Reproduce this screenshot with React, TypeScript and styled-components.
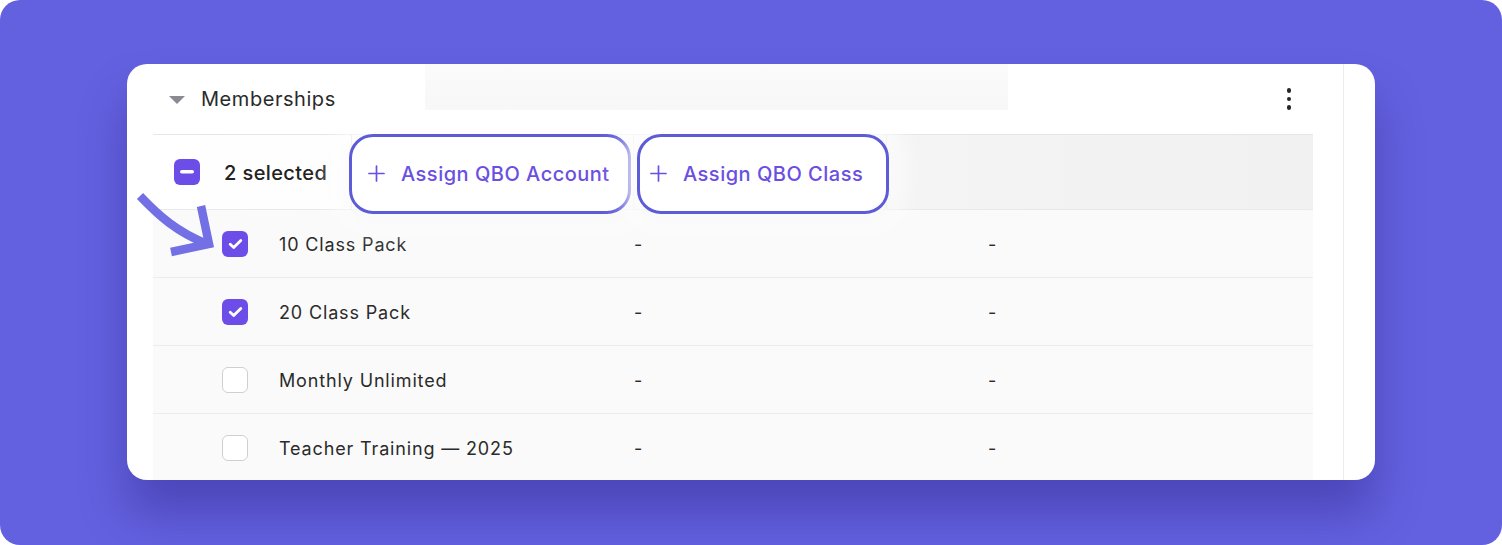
import React from "react";
import styled, { createGlobalStyle } from "styled-components";

const GlobalStyle = createGlobalStyle`
  html, body {
    margin: 0;
    padding: 0;
    background: #ffffff;
  }
  body {
    font-family: Inter, "Noto Sans", "Liberation Sans", sans-serif;
    -webkit-font-smoothing: antialiased;
  }
`;

const Canvas = styled.div`
  width: 1502px;
  height: 545px;
  box-sizing: border-box;
  background: #6461e0;
  border-radius: 20px;
  padding: 64px 127px 0 127px;
  overflow: hidden;
`;

const Card = styled.div`
  position: relative;
  height: 416px;
  background: #ffffff;
  border-radius: 20px;
  overflow: hidden;
  display: flex;
  box-shadow: 0 34px 46px rgba(44, 36, 130, 0.42);
`;

const Main = styled.div`
  width: 1216px;
  box-sizing: border-box;
  padding: 0 30px 0 26px;
`;

const SidePane = styled.div`
  flex: 1;
  border-left: 1px solid #ececec;
`;

const Header = styled.div`
  position: relative;
  height: 70px;
  display: flex;
  align-items: center;
  padding-left: 16px;
`;

const Caret = styled.span`
  width: 0;
  height: 0;
  border-left: 8px solid transparent;
  border-right: 8px solid transparent;
  border-top: 8px solid #8b8a90;
  margin-top: 2px;
`;

const Title = styled.span`
  margin-left: 16px;
  font-size: 20px;
  color: #2a2a2a;
  letter-spacing: 0.55px;
`;

const Haze = styled.div`
  position: absolute;
  left: 272px;
  top: 0;
  width: 583px;
  height: 46px;
  background: linear-gradient(180deg, #fbfbfb, #f7f7f7);
`;

const Kebab = styled.div`
  margin-left: auto;
  margin-right: 22px;
  display: flex;
  flex-direction: column;
  gap: 4px;
  span {
    width: 4.5px;
    height: 4.5px;
    border-radius: 50%;
    background: #262626;
  }
`;

const Bar = styled.div`
  height: 76px;
  box-sizing: border-box;
  display: flex;
  align-items: center;
  border-top: 1px solid #e6e6e6;
  border-bottom: 1px solid #e9e9e9;
  background: linear-gradient(90deg, #ffffff 0%, #fcfcfc 30%, #f4f4f4 62%, #f1f1f1 100%);
`;

const SelectCell = styled.div`
  width: 198px;
  height: 100%;
  box-sizing: border-box;
  display: flex;
  align-items: center;
  gap: 24px;
  padding-left: 21px;
`;

const SelectedText = styled.span`
  font-size: 20px;
  font-weight: 500;
  color: #222222;
  letter-spacing: 0.4px;
  margin-top: 1px;
`;

const ActionCell = styled.div<{ $w: number }>`
  width: ${(p) => p.$w}px;
  height: 100%;
  box-sizing: border-box;
  display: flex;
  align-items: center;
  border-left: 1px solid #dedede;
  &:last-of-type {
    border-right: 1px solid #dedede;
  }
`;

const ActionButton = styled.button<{ $w: number; $shift: number; $pad: number }>`
  width: ${(p) => p.$w}px;
  height: 80px;
  margin-left: ${(p) => p.$shift}px;
  margin-top: 3px;
  flex-shrink: 0;
  position: relative;
  z-index: 2;
  box-sizing: border-box;
  display: flex;
  align-items: center;
  gap: 16px;
  padding: 0 0 0 ${(p) => p.$pad}px;
  background: #ffffff;
  border: 3px solid #5e5bd8;
  border-radius: 24px;
  font-family: Inter, "Noto Sans", "Liberation Sans", sans-serif;
  font-size: 20px;
  font-weight: 500;
  letter-spacing: 0.5px;
  white-space: nowrap;
  color: #6a4fe2;
  cursor: pointer;
  box-shadow: 0 0 24px 14px rgba(255, 255, 255, 0.85), 0 4px 16px rgba(0, 0, 0, 0.09);
`;

const Checkbox = styled.span<{ $on?: boolean }>`
  width: 26px;
  height: 26px;
  box-sizing: border-box;
  border-radius: 6px;
  display: inline-flex;
  align-items: center;
  justify-content: center;
  flex-shrink: 0;
  background: ${(p) => (p.$on ? "#6d4de8" : "#ffffff")};
  border: ${(p) => (p.$on ? "none" : "1.5px solid #cfcfcf")};
`;

const Row = styled.div`
  height: 68px;
  box-sizing: border-box;
  display: grid;
  grid-template-columns: 126px 355px 354px 1fr;
  align-items: center;
  background: #fafafa;
  border-bottom: 1px solid #ececec;
  font-size: 18px;
  letter-spacing: 0.85px;
  color: #2b2b2b;
  padding-top: 1px;
`;

const CheckCell = styled.div`
  padding-left: 69px;
  display: flex;
`;

const Arrow = styled.svg`
  position: absolute;
  left: 4px;
  top: 122px;
  pointer-events: none;
`;

const Plus = () => (
  <svg width="17" height="17" viewBox="0 0 17 17">
    <path d="M8.5 1v15M1 8.5h15" stroke="#6a4fe2" strokeWidth="1.7" strokeLinecap="round" />
  </svg>
);

const Check = () => (
  <svg width="15" height="12" viewBox="0 0 15 12">
    <path d="M2.2 6.2l3.5 3.4L12.8 2.4" fill="none" stroke="#ffffff" strokeWidth="2.8" strokeLinecap="round" strokeLinejoin="round" />
  </svg>
);

const Minus = () => (
  <svg width="14" height="4" viewBox="0 0 14 4">
    <rect x="0" y="0" width="14" height="3.6" rx="1.8" fill="#ffffff" />
  </svg>
);

const rows = [
  { name: "10 Class Pack", on: true },
  { name: "20 Class Pack", on: true },
  { name: "Monthly Unlimited", on: false },
  { name: "Teacher Training — 2025", on: false },
];

export default function App() {
  return (
    <>
      <GlobalStyle />
      <Canvas>
        <Card>
          <Main>
            <Header>
              <Caret />
              <Title>Memberships</Title>
              <Haze />
              <Kebab>
                <span />
                <span />
                <span />
              </Kebab>
            </Header>
            <Bar>
              <SelectCell>
                <Checkbox $on>
                  <Minus />
                </Checkbox>
                <SelectedText>2 selected</SelectedText>
              </SelectCell>
              <ActionCell $w={282}>
                <ActionButton $w={282} $shift={-3} $pad={16}>
                  <Plus />
                  Assign QBO Account
                </ActionButton>
              </ActionCell>
              <ActionCell $w={254}>
                <ActionButton $w={252} $shift={3} $pad={10}>
                  <Plus />
                  Assign QBO Class
                </ActionButton>
              </ActionCell>
            </Bar>
            {rows.map((r) => (
              <Row key={r.name}>
                <CheckCell>
                  <Checkbox $on={r.on}>{r.on && <Check />}</Checkbox>
                </CheckCell>
                <span>{r.name}</span>
                <span>-</span>
                <span>-</span>
              </Row>
            ))}
          </Main>
          <SidePane />
          <Arrow width="90" height="80" viewBox="0 0 90 80">
            <path
              d="M9 10 C 28 30, 46 46, 76 58"
              fill="none"
              stroke="#7270e4"
              strokeWidth="8.5"
              strokeLinecap="butt"
            />
            <path
              d="M70 20 L 78 58 L 40 66"
              fill="none"
              stroke="#7270e4"
              strokeWidth="8.5"
              strokeLinejoin="miter"
            />
          </Arrow>
        </Card>
      </Canvas>
    </>
  );
}
